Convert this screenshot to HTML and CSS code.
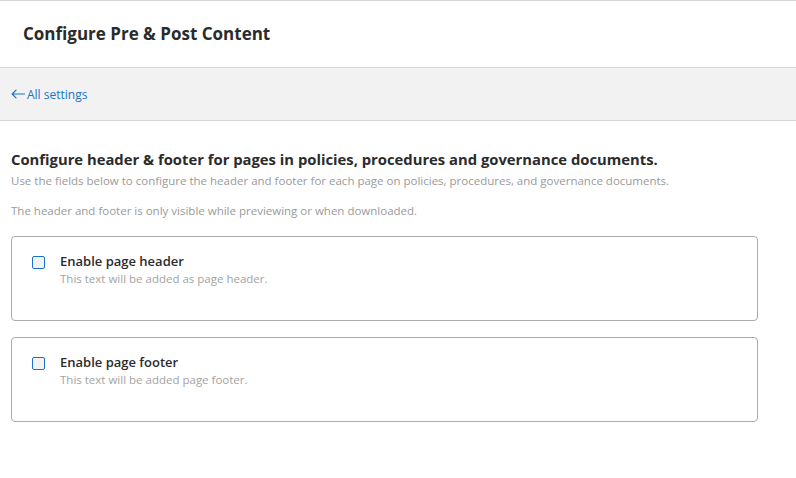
FILE: index.html
```html
<!DOCTYPE html>
<html>
<head>
<meta charset="utf-8">
<link rel="stylesheet" href="styles.css">
</head>
<body>
<div class="page">
  <header class="topbar">
    <h1 class="title">Configure Pre &amp; Post Content</h1>
  </header>
  <nav class="crumbbar">
    <a class="back" href="#">
      <svg class="arrow" width="14" height="10" viewBox="0 0 14 10"><path d="M13.5 5H1.2M5 1.2L1.2 5L5 8.8" fill="none" stroke="#1a73c8" stroke-width="1.2" stroke-linecap="round" stroke-linejoin="round"/></svg><span>All settings</span>
    </a>
  </nav>
  <main class="content">
    <h2 class="heading">Configure header &amp; footer for pages in policies, procedures and governance documents.</h2>
    <p class="desc">Use the fields below to configure the header and footer for each page on policies, procedures, and governance documents.</p>
    <p class="desc note">The header and footer is only visible while previewing or when downloaded.</p>
    <div class="card">
      <span class="checkbox"></span>
      <div class="card-text">
        <div class="card-label">Enable page header</div>
        <div class="card-hint">This text will be added as page header.</div>
      </div>
    </div>
    <div class="card">
      <span class="checkbox"></span>
      <div class="card-text">
        <div class="card-label">Enable page footer</div>
        <div class="card-hint">This text will be added page footer.</div>
      </div>
    </div>
  </main>
</div>
</body>
</html>
```

FILE: styles.css
```css
html, body {
  margin: 0;
  padding: 0;
  background: #ffffff;
}
body {
  font-family: "Open Sans", "Noto Sans", sans-serif;
  color: #2b2b2b;
}
.page {
  width: 796px;
}
.topbar {
  border-top: 1px solid #d4d4d4;
  border-bottom: 1px solid #d4d4d4;
  height: 66px;
  display: flex;
  align-items: center;
  padding-left: 23px;
  box-sizing: content-box;
}
.title {
  margin: 0 0 2px;
  font-size: 17px;
  font-weight: 700;
  color: #2b2b2b;
}
.crumbbar {
  background: #f2f2f2;
  border-bottom: 1px solid #d4d4d4;
  height: 52px;
  display: flex;
  align-items: center;
  padding-left: 11px;
}
.back {
  display: flex;
  align-items: center;
  gap: 2px;
  color: #1a73c8;
  text-decoration: none;
  font-size: 12px;
}
.arrow {
  display: block;
}
.content {
  padding: 28px 38px 0 11px;
}
.heading {
  margin: 0;
  font-size: 14.8px;
  font-weight: 700;
  color: #2b2b2b;
  line-height: 20px;
}
.desc {
  margin: 4px 0 0;
  font-size: 11.5px;
  line-height: 15px;
  color: #9a9a9a;
}
.note {
  margin-top: 15px;
}
.card {
  margin-top: 18px;
  border: 1px solid #ababab;
  border-radius: 4px;
  height: 85px;
  display: flex;
  align-items: flex-start;
  padding: 16px 0 0 20px;
  box-sizing: border-box;
}
.card + .card {
  margin-top: 16px;
}
.checkbox {
  box-sizing: border-box;
  width: 13px;
  height: 13px;
  border: 1.5px solid #1a73c8;
  border-radius: 2px;
  background: #f2f2f2;
  margin-top: 3px;
  flex: none;
}
.card-text {
  margin-left: 15px;
}
.card-label {
  font-size: 13px;
  font-weight: 600;
  line-height: 17px;
  color: #2b2b2b;
}
.card-hint {
  margin-top: 2px;
  font-size: 11.5px;
  line-height: 14px;
  color: #a3a3a3;
}
```
